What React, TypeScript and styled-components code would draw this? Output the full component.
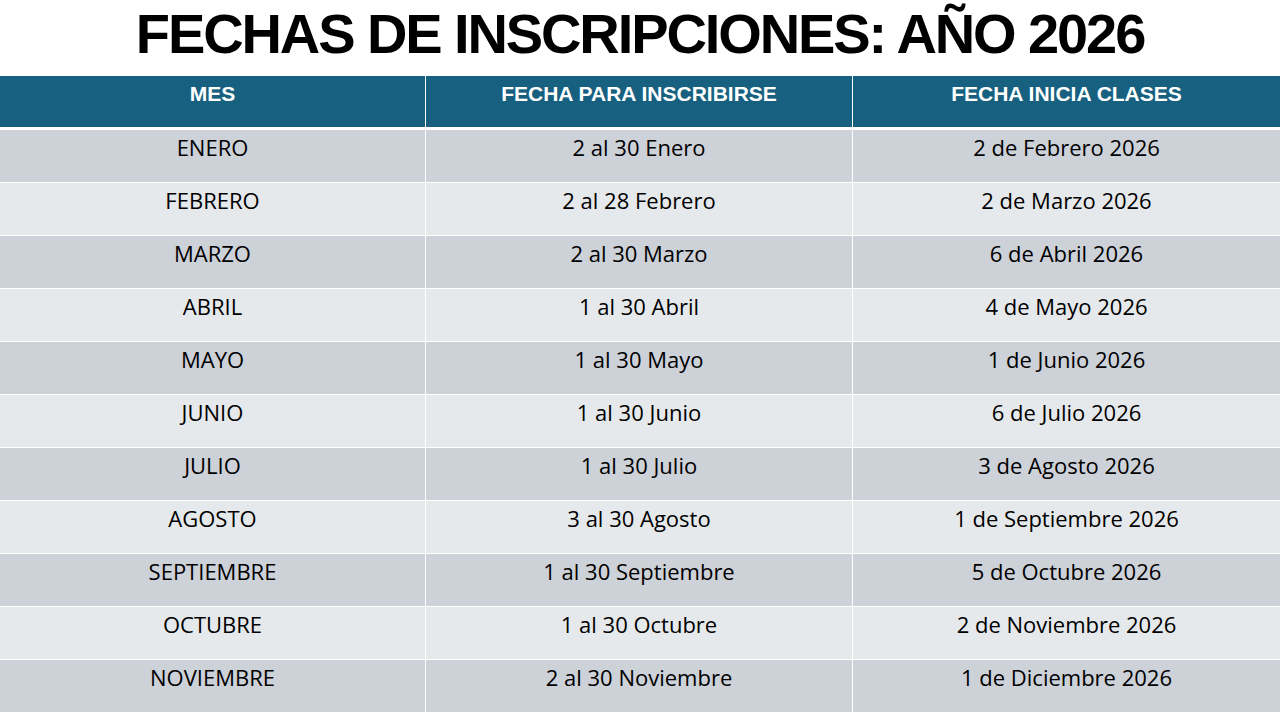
import React from 'react';
import styled, { createGlobalStyle } from 'styled-components';

const GlobalStyle = createGlobalStyle`
  html, body {
    margin: 0;
    padding: 0;
    background: #ffffff;
  }
`;

const Page = styled.div`
  width: 1280px;
  height: 720px;
  display: flex;
  flex-direction: column;
  font-family: 'Liberation Sans', Arial, sans-serif;
  background: #ffffff;
`;

// Big slide title
const Title = styled.h1`
  margin: 0;
  height: 76px;
  box-sizing: border-box;
  padding-top: 6px;
  line-height: 56px;
  text-align: center;
  font-size: 56px;
  font-weight: 700;
  color: #000000;
  letter-spacing: -2.1px;
  white-space: nowrap;
`;

const Table = styled.div`
  display: grid;
  grid-template-columns: 426px 427px 427px;
`;

const HeadCell = styled.div<{ $last?: boolean }>`
  height: 54px;
  box-sizing: border-box;
  padding-top: 6px;
  background: #17607f;
  color: #ffffff;
  font-family: 'Liberation Sans', Arial, sans-serif;
  font-weight: 700;
  font-size: 21px;
  line-height: 24px;
  text-align: center;
  border-bottom: 3px solid #ffffff;
  border-right: ${(p) => (p.$last ? 'none' : '1px solid #ffffff')};
`;

const Cell = styled.div<{ $shade: boolean; $last?: boolean }>`
  height: 53px;
  box-sizing: border-box;
  padding-top: 5px;
  background: ${(p) => (p.$shade ? '#cdd1d8' : '#e6e9ec')};
  color: #000000;
  font-family: 'Open Sans', 'Liberation Sans', sans-serif;
  font-size: 22px;
  line-height: 24px;
  text-align: center;
  border-bottom: 1px solid #ffffff;
  border-right: ${(p) => (p.$last ? 'none' : '1px solid #ffffff')};
`;

const rows: [string, string, string][] = [
  ['ENERO', '2 al 30 Enero', '2 de Febrero 2026'],
  ['FEBRERO', '2 al 28 Febrero', '2 de Marzo 2026'],
  ['MARZO', '2 al 30 Marzo', '6 de Abril 2026'],
  ['ABRIL', '1 al 30 Abril', '4 de Mayo 2026'],
  ['MAYO', '1 al 30 Mayo', '1 de Junio 2026'],
  ['JUNIO', '1 al 30 Junio', '6 de Julio 2026'],
  ['JULIO', '1 al 30 Julio', '3 de Agosto 2026'],
  ['AGOSTO', '3 al 30 Agosto', '1 de Septiembre 2026'],
  ['SEPTIEMBRE', '1 al 30 Septiembre', '5 de Octubre 2026'],
  ['OCTUBRE', '1 al 30 Octubre', '2 de Noviembre 2026'],
  ['NOVIEMBRE', '2 al 30 Noviembre', '1 de Diciembre 2026'],
];

const App: React.FC = () => {
  return (
    <>
      <GlobalStyle />
      <Page>
        <Title>FECHAS DE INSCRIPCIONES: AÑO 2026</Title>
        <Table>
          <HeadCell>MES</HeadCell>
          <HeadCell>FECHA PARA INSCRIBIRSE</HeadCell>
          <HeadCell $last>FECHA INICIA CLASES</HeadCell>
          {rows.map((r, i) =>
            r.map((text, j) => (
              <Cell key={`${i}-${j}`} $shade={i % 2 === 0} $last={j === 2}>
                {text}
              </Cell>
            ))
          )}
        </Table>
      </Page>
    </>
  );
};

export default App;
